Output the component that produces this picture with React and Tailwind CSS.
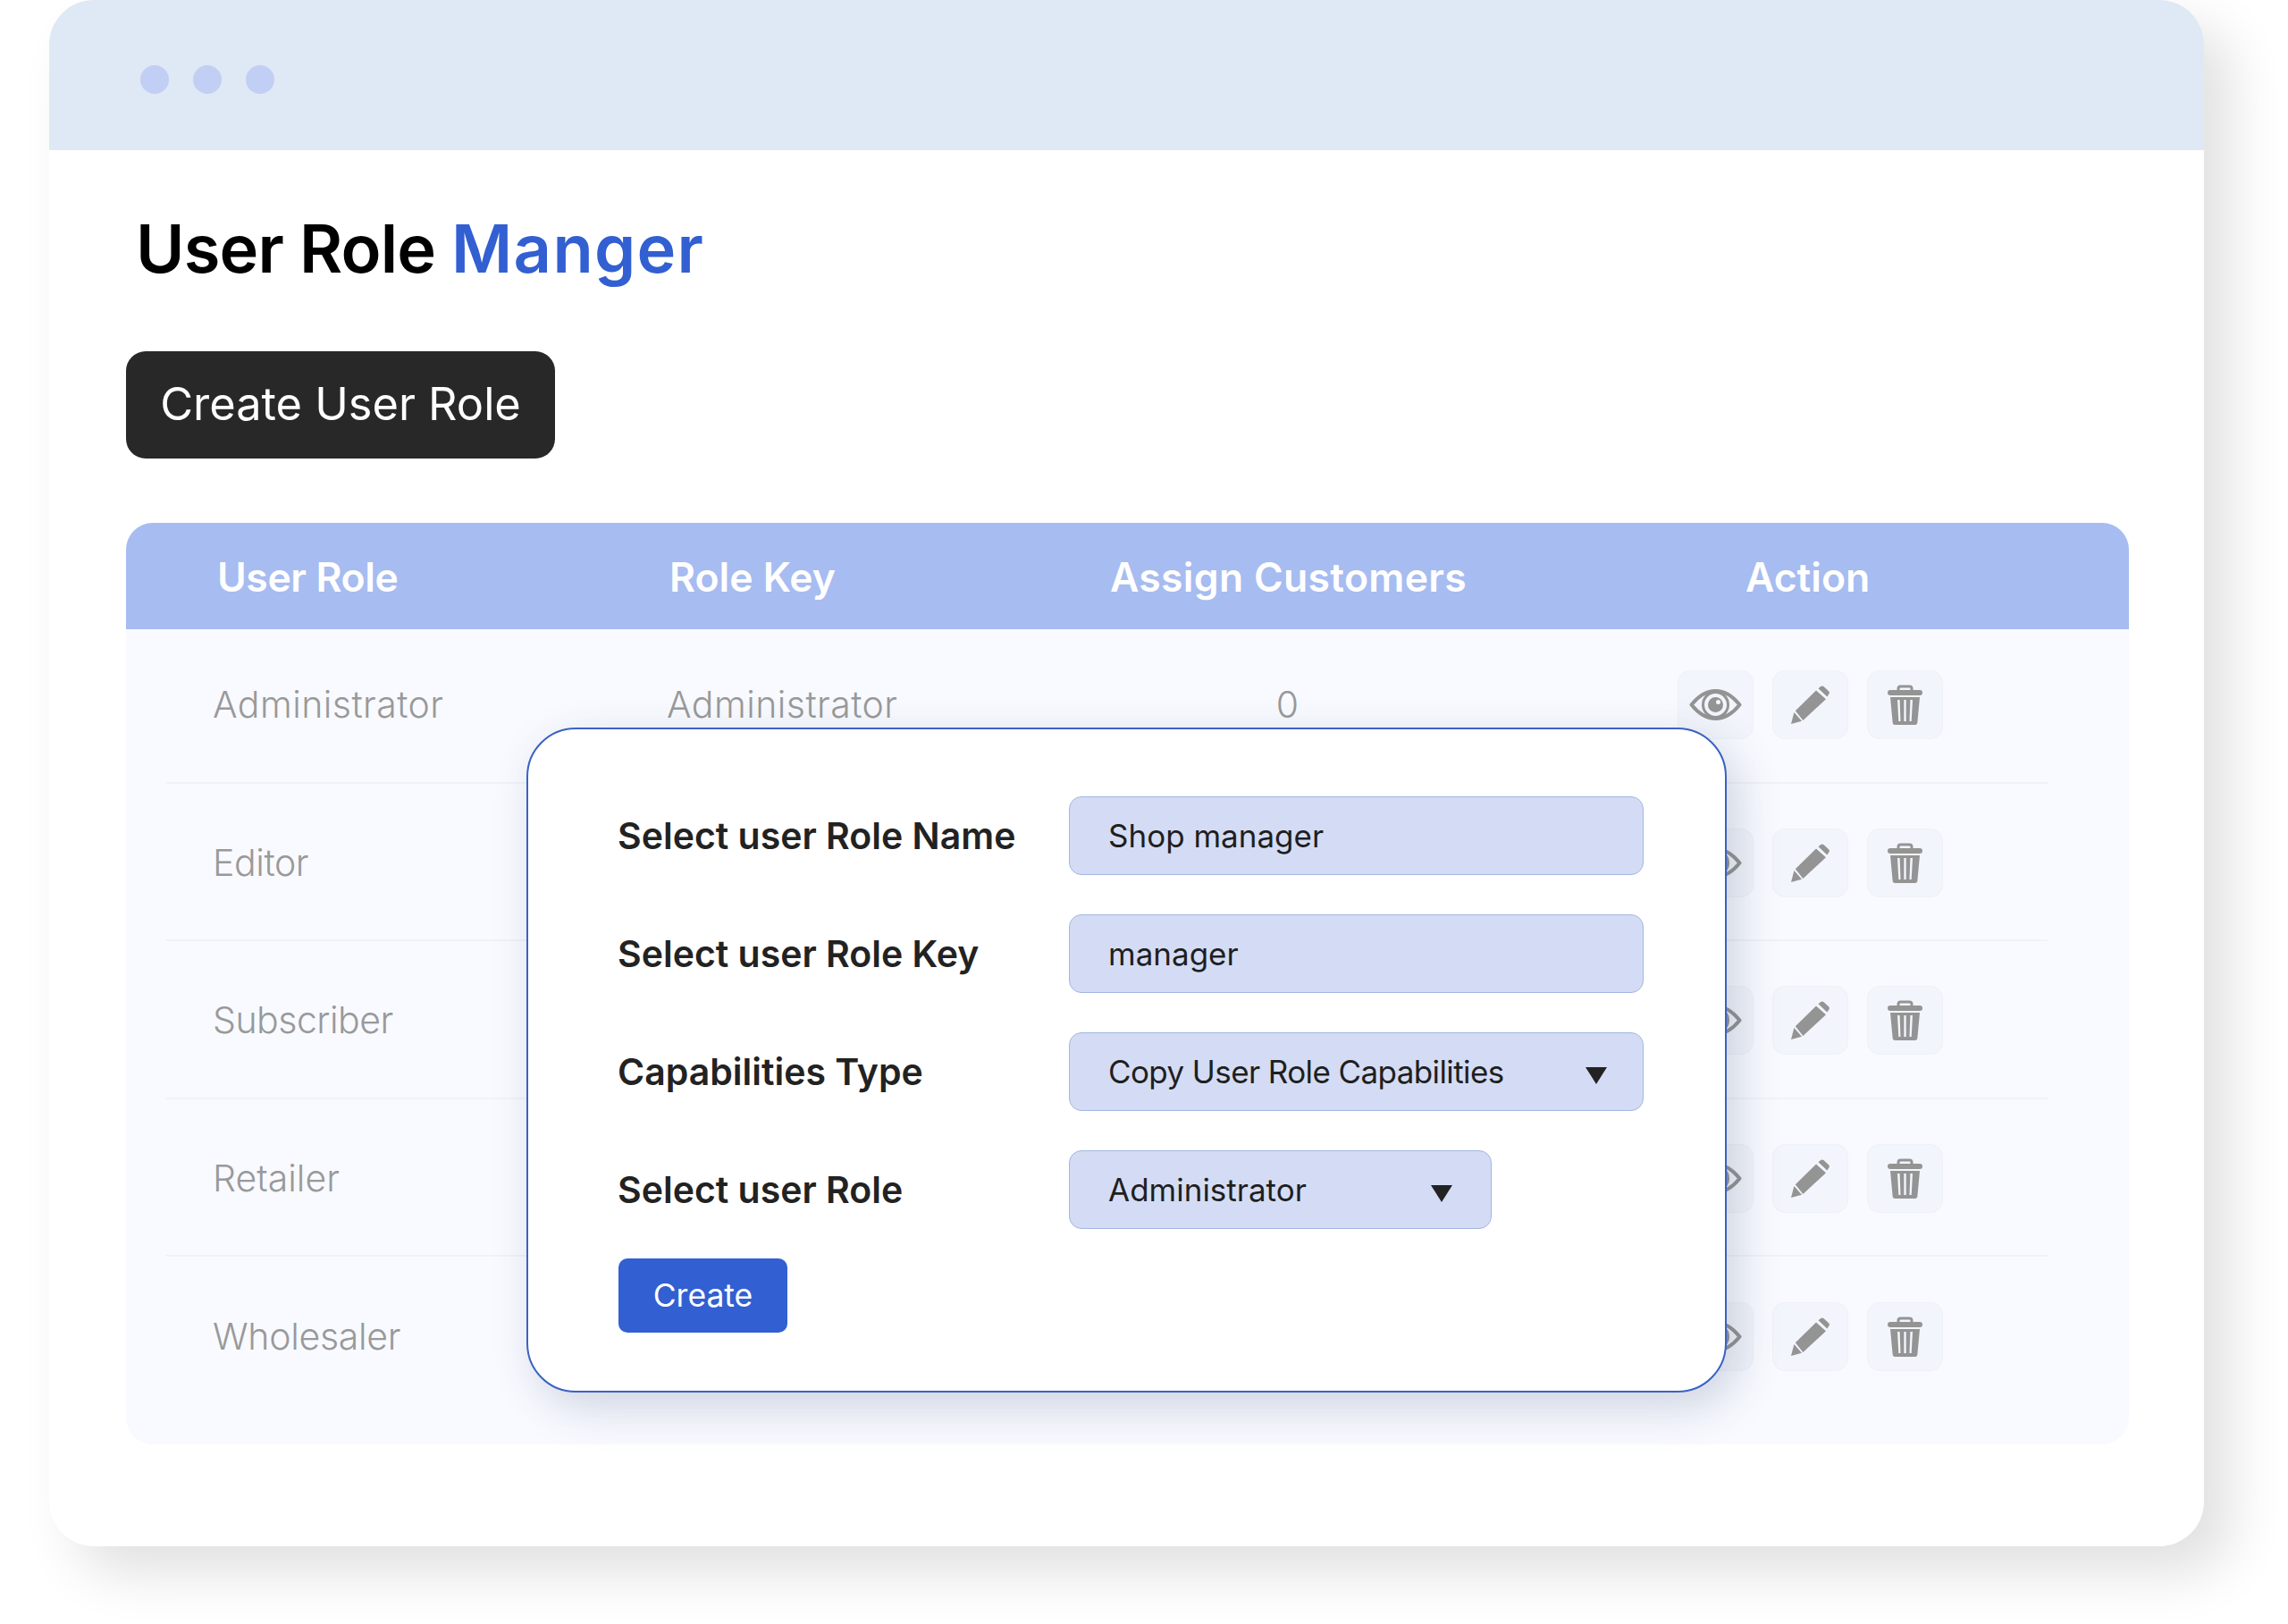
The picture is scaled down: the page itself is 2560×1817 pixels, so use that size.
const rows = [
  ["Administrator", "Administrator", "0", "tracking-[0.45px]"],
  ["Editor", "", "", "tracking-[-0.4px]"],
  ["Subscriber", "", "", "tracking-[-0.5px]"],
  ["Retailer", "", "", ""],
  ["Wholesaler", "", "", "tracking-[-0.3px]"],
];

function Eye() {
  return (
    <svg width="59" height="35" viewBox="0 0 59 35" fill="none">
      <path d="M2.5 17.5C11 7 20 2 29.5 2S48 7 56.5 17.5C48 28 39 33 29.5 33S11 28 2.5 17.5Z" stroke="#949494" strokeWidth="4" strokeLinejoin="round" />
      <circle cx="29.5" cy="17.5" r="14" stroke="#949494" strokeWidth="3" />
      <circle cx="29.5" cy="17.5" r="8.5" fill="#949494" />
      <circle cx="32.5" cy="14.5" r="2.5" fill="#f4f6fb" />
    </svg>
  );
}

function Pencil() {
  return (
    <svg width="43" height="43" viewBox="0 0 43 43" fill="#949494">
      <path d="M30.5 3.2L33.2 1a2.5 2.5 0 0 1 3.2.1L42 6.3a2.5 2.5 0 0 1 .2 3.4L40.3 12.6Z" />
      <path d="M28 5.6L39 15.2 13.4 39 4.8 28.2Z" />
      <path d="M3.4 30l8.6 9.8L0 43Z" />
    </svg>
  );
}

function Trash() {
  return (
    <svg width="39" height="45" viewBox="0 0 39 45" fill="none">
      <path d="M12 7V4.5A2.5 2.5 0 0 1 14.5 2h10A2.5 2.5 0 0 1 27 4.5V7" stroke="#949494" strokeWidth="3" />
      <rect x="0" y="6" width="39" height="6" rx="3" fill="#949494" />
      <path fillRule="evenodd" clipRule="evenodd" fill="#949494" d="M3 14h33l-2.6 28a3 3 0 0 1-3 3H8.6a3 3 0 0 1-3-3ZM11 17l1.3 24h2.2L13.6 17ZM18.3 17v24h2.4V17ZM25.4 17l-.9 24h2.2L28 17Z" />
    </svg>
  );
}

function ActionButton({ children }) {
  return (
    <div className="flex h-[77px] w-[85px] items-center justify-center rounded-[14px] border border-[#eef1f7] bg-[#f2f5fb]">
      {children}
    </div>
  );
}

function Field({ label, value, arrow, narrow, tight }) {
  return (
    <div className="flex h-[88px] items-center">
      <div className="w-[505px] pt-[2px] text-[41px] font-semibold text-[#222222]">{label}</div>
      <div className={`relative flex h-[88px] items-center rounded-[14px] border border-[#a3b6e0] bg-[#d4dcf5] pl-[43px] text-[35px] text-[#1f1f1f] ${narrow ? "w-[473px]" : "w-[643px]"}`}>
        <span className={tight ? "tracking-[-0.6px]" : ""}>{value}</span>
        {arrow && <div className={`absolute top-[38px] h-0 w-0 border-x-[12px] border-t-[19px] border-x-transparent border-t-[#222222] ${narrow ? "right-[43px]" : "right-[40px]"}`} />}
      </div>
    </div>
  );
}

export default function App() {
  return (
    <div className="h-[1817px] w-[2560px] overflow-hidden bg-white pl-[55px] font-['Inter','Liberation_Sans',sans-serif]">
      <div className="relative h-[1730px] w-[2411px] rounded-[50px] bg-white shadow-[30px_30px_60px_rgba(0,0,0,0.12)]">
        <div className="flex h-[168px] items-start gap-[27px] rounded-t-[50px] bg-[#dfe8f5] pl-[102px] pt-[73px]">
          <div className="h-[32px] w-[32px] rounded-full bg-[#c0cff3]" />
          <div className="h-[32px] w-[32px] rounded-full bg-[#c0cff3]" />
          <div className="h-[32px] w-[32px] rounded-full bg-[#c0cff3]" />
        </div>
        <div className="pl-[86px] pr-[84px] pt-[60px]">
          <h1 className="pl-[11px] text-[74px] leading-[100px] font-semibold tracking-[-0.8px] text-black">
            User Role <span className="tracking-[1.3px] text-[#325fd1]">Manger</span>
          </h1>
          <button className="mt-[65px] flex h-[120px] w-[480px] items-center justify-center rounded-[22px] bg-[#282828] pb-[2px] text-[50.5px] text-white">
            Create User Role
          </button>
          <div className="mt-[72px] h-[1031px] rounded-[30px] bg-[#f8faff]">
            <div className="grid h-[119px] grid-cols-[608px_493px_711px_429px] items-center rounded-t-[30px] bg-[#a7bcf0] pt-[3px] text-[44.5px] font-semibold text-white">
              <div className="pl-[102px] tracking-[-0.4px]">User Role</div>
              <div>Role Key</div>
              <div className="tracking-[0.3px]">Assign Customers</div>
              <div>Action</div>
            </div>
            <div className="ml-[44px] mr-[91px] -mt-[4px]">
              {rows.map((r, i) => (
                <div key={r[0]} className={`grid h-[176.5px] grid-cols-[561px_493px_400px_1fr] items-center pt-[3px] text-[41px] font-light text-[#999999] ${i < 4 ? "border-b-2 border-[#f0f2f7]" : ""}`}>
                  <div className={`pl-[53px] ${r[3]}`}>{r[0]}</div>
                  <div className="tracking-[0.45px]">{r[1]}</div>
                  <div className="pl-[3px] text-center">{r[2]}</div>
                  <div className="flex gap-[21px] pl-[238px]">
                    <ActionButton><Eye /></ActionButton>
                    <ActionButton><Pencil /></ActionButton>
                    <ActionButton><Trash /></ActionButton>
                  </div>
                </div>
              ))}
            </div>
          </div>
        </div>
        <div className="absolute left-[534px] top-[814px] h-[744px] w-[1343px] rounded-[55px] border-2 border-[#3a62c4] bg-white pl-[100px] pt-[75px] shadow-[12px_16px_50px_rgba(40,60,100,0.2)]">
          <div className="flex flex-col gap-[44px]">
            <Field label="Select user Role Name" value="Shop manager" />
            <Field label="Select user Role Key" value="manager" />
            <Field label="Capabilities Type" value="Copy User Role Capabilities" arrow tight />
            <Field label="Select user Role" value="Administrator" arrow narrow />
          </div>
          <button className="ml-[1px] mt-[33px] flex h-[83px] w-[189px] items-center justify-center rounded-[10px] bg-[#325fd1] text-[35.5px] text-white">
            Create
          </button>
        </div>
      </div>
    </div>
  );
}
